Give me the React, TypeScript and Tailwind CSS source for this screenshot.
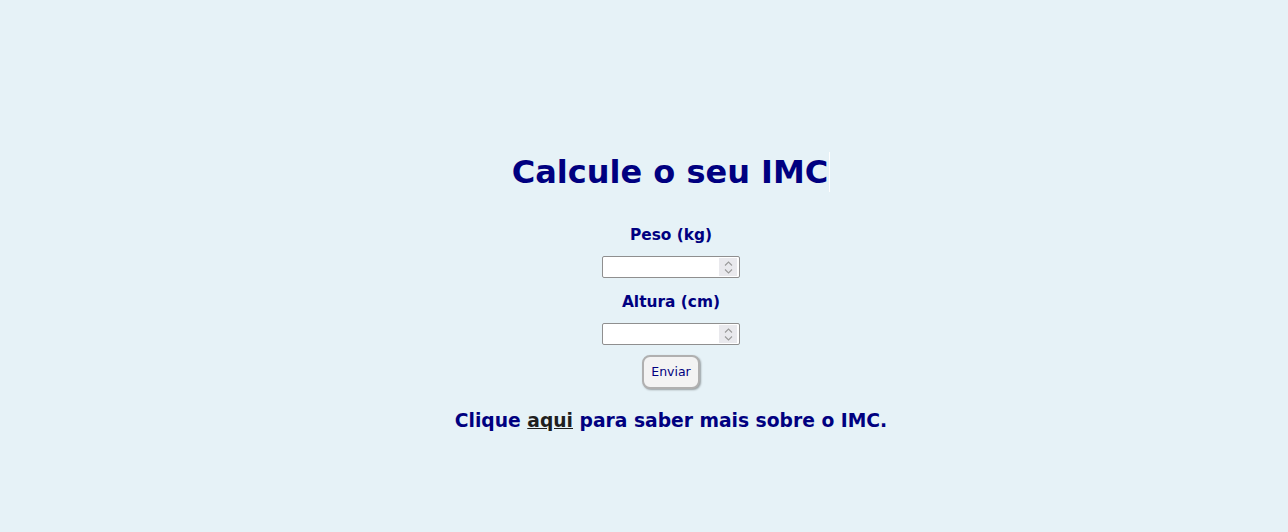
const NumberField = ({ id, className }: { id: string; className: string }) => (
    <div className={"relative " + className}>
        <input
            id={id}
            type="number"
            className="block w-[138px] h-[22px] bg-white border border-[#8f8f8f] rounded-[2px] px-[2px] text-[13px] [appearance:textfield] [&::-webkit-inner-spin-button]:appearance-none [&::-webkit-outer-spin-button]:appearance-none"
        />
        {/* spinner, drawn since headless chrome only shows it on hover */}
        <div className="absolute right-[3px] top-[2px] w-[18px] h-[18px] bg-[#e9e9ed] flex flex-col items-center justify-center gap-[3px]">
            <svg width="9" height="5" viewBox="0 0 9 5" fill="none" stroke="#9a9a9a" strokeWidth="1.1">
                <path d="M1 4.5 L4.5 1 L8 4.5" />
            </svg>
            <svg width="9" height="5" viewBox="0 0 9 5" fill="none" stroke="#9a9a9a" strokeWidth="1.1">
                <path d="M1 0.5 L4.5 4 L8 0.5" />
            </svg>
        </div>
    </div>
);

export default function App() {
    return (
        <div className="min-h-[532px] w-full bg-[#e6f2f7] font-['DejaVu_Sans',Verdana,sans-serif] text-[#000080]">
            <div className="flex flex-col items-center pt-[152px] pl-[54px]">
                <h1 className="text-[32px] font-bold leading-[40px] border-r border-white pr-[1px]">Calcule o seu IMC</h1>

                <form className="flex flex-col items-center mt-[33px]" onSubmit={e => e.preventDefault()}>
                    <label htmlFor="peso" className="text-[15.4px] font-bold leading-[20px]">Peso (kg)</label>
                    <NumberField id="peso" className="mt-[11px]" />
                    <label htmlFor="altura" className="mt-[14px] text-[15.4px] font-bold leading-[20px]">Altura (cm)</label>
                    <NumberField id="altura" className="mt-[11px]" />
                    <button
                        type="submit"
                        className="mt-[10px] w-[58px] h-[34px] rounded-[8px] bg-[#f3f3f3] border-2 border-[#b0b0b0] shadow-[1px_1px_2px_rgba(0,0,0,0.35)] text-[12.5px] text-[#000080]"
                    >
                        Enviar
                    </button>
                </form>

                <h3 className="mt-[20px] text-[18.72px] font-bold leading-[24px]">
                    Clique <a href="#" className="underline text-[#1f1f1f]">aqui</a> para saber mais sobre o IMC.
                </h3>
            </div>
        </div>
    );
}
